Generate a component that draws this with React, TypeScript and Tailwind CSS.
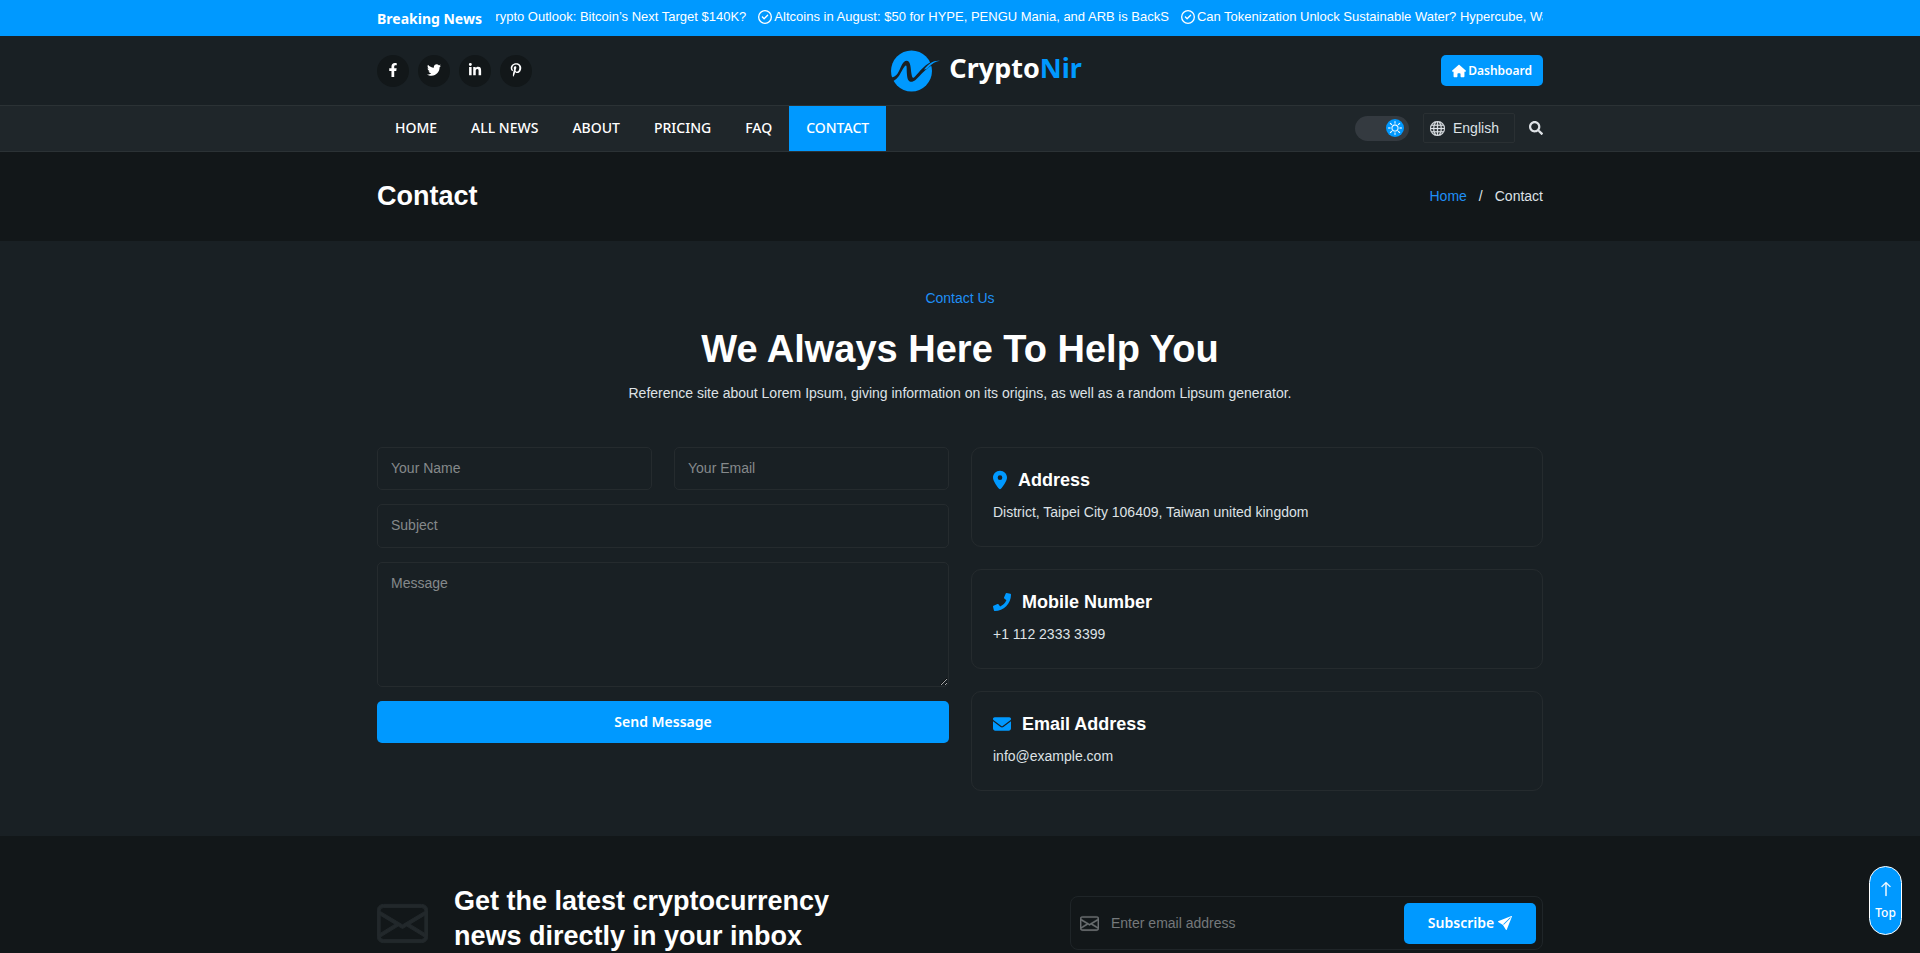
import { FaFacebookF, FaTwitter, FaLinkedinIn, FaPinterestP, FaPhone, FaSearch } from "react-icons/fa";
import { FaLocationDot, FaEnvelope, FaRegCircleCheck, FaHouse } from "react-icons/fa6";
import { BsArrowUp, BsEnvelope, BsGlobe, BsSendFill, BsSun } from "react-icons/bs";

const headlines = [
  "Crypto Outlook: Bitcoin’s Next Target $140K?",
  "Altcoins in August: $50 for HYPE, PENGU Mania, and ARB is BackS",
  "Can Tokenization Unlock Sustainable Water? Hypercube, Water",
];

const socials = [
  { label: "Facebook", icon: FaFacebookF },
  { label: "Twitter", icon: FaTwitter },
  { label: "LinkedIn", icon: FaLinkedinIn },
  { label: "Pinterest", icon: FaPinterestP },
];

const links = ["Home", "All News", "About", "Pricing", "FAQ", "Contact"];

const contacts = [
  { title: "Address", text: "District, Taipei City 106409, Taiwan united kingdom", icon: FaLocationDot, size: "h-[20px] w-[14px]" },
  { title: "Mobile Number", text: "+1 112 2333 3399", icon: FaPhone, size: "size-[18px]" },
  { title: "Email Address", text: "info@example.com", icon: FaEnvelope, size: "size-[18px]" },
];

const container = "mx-auto w-full max-w-[1190px] px-3";
const field =
  "w-full rounded-[5px] border border-[#252b2e] bg-transparent px-[13px] text-sm text-white placeholder:text-[#85898b] outline-none";

function BreakingNews() {
  return (
    <div className="bg-[#0099ff] text-white">
      <div className={`${container} flex h-9 items-center gap-[14px]`}>
        <p className="shrink-0 pt-[2px] font-['Noto_Sans'] text-sm font-bold">Breaking News</p>
        {/* Ticker, part way through its scroll */}
        <div className="min-w-0 flex-1 overflow-hidden pb-[3px]">
          <ul className="-ml-[26px] flex w-max gap-3 text-[13px]">
            {headlines.map((item) => (
              <li key={item} className="flex items-center gap-[2px] whitespace-nowrap">
                <FaRegCircleCheck className="size-[14px]" />
                {item}
              </li>
            ))}
          </ul>
        </div>
      </div>
    </div>
  );
}

function Logo() {
  return (
    <a href="#" className="flex items-center gap-2 font-['Noto_Sans'] text-[27px] leading-none font-bold">
      <svg viewBox="0 0 50 42" className="h-[42px] w-[50px]">
        <circle cx="20.5" cy="21" r="20.5" fill="#0099ff" />
        <path
          d="M-1 27.5C3 27.5 5.500 26 8 21C10.500 16 12 10.700 15.500 10.700C20 10.700 19.500 18 20.500 24C21 27 21.500 28.500 23 27.500C26 25 32 15.500 41 11.500L42 15C35 18 30 25 24.500 30C20 33.500 16.500 32 16 25C15.500 19 16 15.500 15 15.500C13 15.500 10.500 22.500 7.500 26.500C5 30 2 31.500 0 31.500Z"
          fill="#192024"
        />
        <path d="M33 19.500C38 13 43 10 49 10.800C44.500 11.500 41 13.500 38.500 16.500C37 18.300 35 19.500 33 19.500Z" fill="#0099ff" />
      </svg>
      <span className="pb-[6px]">
        Crypto<span className="text-[#0099ff]">Nir</span>
      </span>
    </a>
  );
}

function Header() {
  return (
    <header className="font-['Noto_Sans']">
      <div className={`${container} flex h-[69px] items-center justify-between`}>
        <div className="flex gap-[9px]">
          {socials.map(({ label, icon: Icon }) => (
            <a
              key={label}
              href="#"
              aria-label={label}
              className="flex size-8 items-center justify-center rounded-full bg-[#121719] pb-[2px]"
            >
              <Icon className="size-[14px]" />
            </a>
          ))}
        </div>
        <Logo />
        <button className="flex h-[31px] items-center gap-[2px] rounded-[5px] bg-[#0099ff] px-[11px] text-xs font-semibold">
          <FaHouse className="size-[14px]" />
          Dashboard
        </button>
      </div>
      <div className="border-y border-[#2b3235] bg-[#1f262a]">
        <div className={`${container} flex h-[45px] items-center justify-between`}>
          <nav className="flex h-full pl-px text-sm font-medium uppercase">
            {links.map((link) => (
              <a
                key={link}
                href="#"
                className={`flex items-center px-[17px] pb-px ${link === "Contact" ? "bg-[#0099ff]" : ""}`}
              >
                {link}
              </a>
            ))}
          </nav>
          <div className="flex items-center gap-[14px] pb-px text-[#dee2e6]">
            <button aria-label="Toggle dark mode" className="flex h-[25px] w-[54px] items-center justify-end rounded-full bg-[#343a40] pr-[5px]">
              <span className="flex size-[18px] items-center justify-center rounded-full bg-[#0099ff] text-white">
                <BsSun className="size-[14px] stroke-current [stroke-width:0.2]" />
              </span>
            </button>
            <div className="flex h-[30px] w-[92px] items-center gap-2 rounded-xs border border-[#2a3033] px-[6px]">
              <BsGlobe className="size-[15px] shrink-0 stroke-current [stroke-width:0.3]" />
              <select aria-label="Language" className="w-full appearance-none bg-transparent font-['Liberation_Sans'] text-sm outline-none">
                <option>English</option>
              </select>
            </div>
            <button aria-label="Search">
              <FaSearch className="size-[14px]" />
            </button>
          </div>
        </div>
      </div>
    </header>
  );
}

function Breadcrumb() {
  return (
    <section className="bg-[#121719]">
      <div className={`${container} flex h-[89px] items-center justify-between`}>
        <h1 className="text-[27px] font-bold text-white">Contact</h1>
        <div className="flex gap-3 pb-[2px] text-sm">
          <a href="#" className="text-[#1f8ff5]">Home</a>
          <span>/</span>
          <span>Contact</span>
        </div>
      </div>
    </section>
  );
}

function ContactForm() {
  return (
    <form className="grid grid-cols-2 content-start gap-x-[22px] gap-y-[14px]">
      <input type="text" aria-label="Your Name" placeholder="Your Name" className={`${field} h-[43px] pb-[2px]`} />
      <input type="email" aria-label="Your Email" placeholder="Your Email" className={`${field} h-[43px] pb-[2px]`} />
      <input type="text" aria-label="Subject" placeholder="Subject" className={`${field} col-span-2 h-11 pb-[2px]`} />
      <textarea aria-label="Message" placeholder="Message" className={`${field} col-span-2 block h-[125px] resize py-[10px]`} />
      <button type="button" className="col-span-2 h-[42px] rounded-[5px] bg-[#0099ff] font-['Noto_Sans'] text-sm font-semibold text-white">
        Send Message
      </button>
    </form>
  );
}

function Contact() {
  return (
    <main className={`${container} pt-[47px] pb-[45px]`}>
      <div className="text-center">
        <p className="text-sm text-[#1f8ff5]">Contact Us</p>
        <h2 className="mt-[18px] text-[38px] leading-[46px] font-bold text-white">We Always Here To Help You</h2>
        <p className="mt-[11px] text-sm">
          Reference site about Lorem Ipsum, giving information on its origins, as well as a random Lipsum generator.
        </p>
      </div>
      <div className="mt-11 grid grid-cols-2 gap-[22px]">
        <ContactForm />
        <div className="flex flex-col gap-[22px]">
          {contacts.map(({ title, text, icon: Icon, size }) => (
            <div key={title} className="h-[100px] rounded-[10px] border border-[#252b2e] px-[21px] pt-[18px]">
              <h3 className="flex items-center gap-[11px] text-lg font-bold text-white">
                <Icon className={`${size} text-[#0099ff]`} />
                {title}
              </h3>
              <p className="mt-2 text-sm">{text}</p>
            </div>
          ))}
        </div>
      </div>
    </main>
  );
}

function Newsletter() {
  return (
    <section className="bg-[#121719]">
      <div className={`${container} flex items-center justify-between pt-12 pb-12`}>
        <div className="flex items-center gap-[26px]">
          <BsEnvelope className="size-[51px] stroke-current text-[#22282b] [stroke-width:0.3]" />
          <h2 className="max-w-[420px] pb-2 text-[27px] leading-[35px] font-bold text-white">
            Get the latest cryptocurrency news directly in your inbox
          </h2>
        </div>
        <form className="flex h-[54px] w-[473px] items-center rounded-lg border border-[#1f2528] pr-[6px] pl-[9px]">
          <BsEnvelope className="size-[19px] stroke-current text-[#6c7072] [stroke-width:0.4]" />
          <input
            type="email"
            aria-label="Email address"
            placeholder="Enter email address"
            className="min-w-0 flex-1 bg-transparent px-3 text-sm placeholder:text-[#75797b] outline-none"
          />
          <button type="button" className="flex h-[41px] w-[132px] items-center justify-center gap-1 rounded-[5px] bg-[#0099ff] font-['Noto_Sans'] text-sm font-semibold text-white">
            Subscribe
            <BsSendFill className="size-[14px]" />
          </button>
        </form>
      </div>
    </section>
  );
}

export default function App() {
  return (
    <div className="h-screen overflow-hidden bg-[#192024] font-['Liberation_Sans',Arial,sans-serif] text-[#dee2e6]">
      <div className="text-white">
        <BreakingNews />
        <Header />
      </div>
      <Breadcrumb />
      <Contact />
      <Newsletter />
      <a
        href="#"
        className="fixed right-[18px] bottom-[18px] flex h-[69px] w-[33px] flex-col items-center justify-center gap-2 rounded-full border border-white bg-[#0099ff] font-['Noto_Sans'] text-xs leading-4 font-medium text-white"
      >
        <BsArrowUp className="size-4 stroke-current [stroke-width:0.4]" />
        Top
      </a>
    </div>
  );
}
